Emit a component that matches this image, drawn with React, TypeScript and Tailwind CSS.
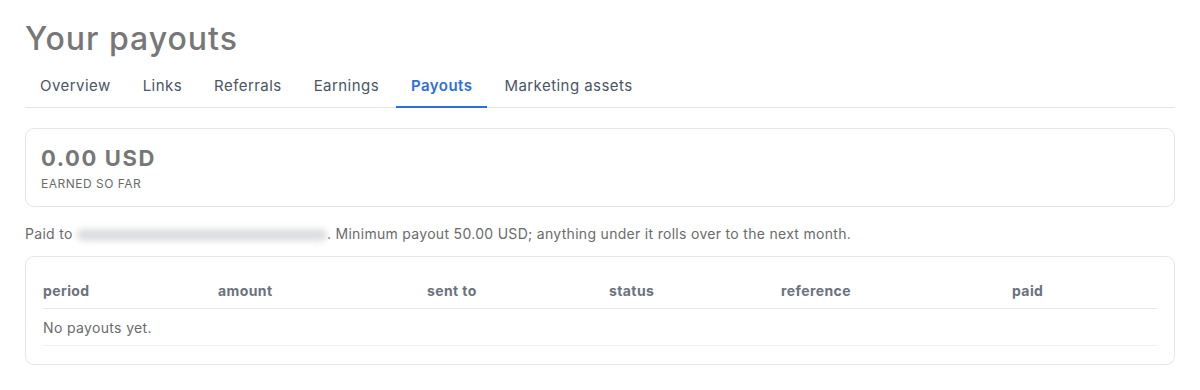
import clsx from 'clsx';

const TABS = ['Overview', 'Links', 'Referrals', 'Earnings', 'Payouts', 'Marketing assets'];
const ACTIVE = 'Payouts';

const COLS = [
  { label: 'period', w: 'w-[175px]' },
  { label: 'amount', w: 'w-[209px]' },
  { label: 'sent to', w: 'w-[182px]' },
  { label: 'status', w: 'w-[172px]' },
  { label: 'reference', w: 'w-[231px]' },
  { label: 'paid', w: 'flex-1' },
];

export default function App() {
  return (
    <div className="min-h-[390px] bg-white px-[25px] pt-[19px] font-['Inter','Liberation_Sans',sans-serif] text-[#6b6b6b]">
      <h1 className="text-[32px] leading-[40px] font-medium tracking-[1px] text-[#777777]">Your payouts</h1>

      <nav className="mt-[10px] flex gap-[2px] border-b border-[#e3e5e8]">
        {TABS.map(t => (
          <div
            key={t}
            className={clsx(
              'px-[15px] pt-[7px] pb-[10px] text-[15px] leading-[20px] tracking-[0.45px] border-b-2 -mb-px',
              t === ACTIVE ? 'border-[#2f6fdc] font-semibold text-[#2f6fdc]' : 'border-transparent text-[#4b5563]',
            )}
          >
            {t}
          </div>
        ))}
      </nav>

      <div className="mt-[20px] rounded-[9px] border border-[#e6e6e6] px-[15px] pt-[15px] pb-[14px]">
        <div className="text-[22px] leading-[28px] font-bold tracking-[1.6px] text-[#777777]">0.00 USD</div>
        <div className="mt-[4px] text-[12px] leading-[16px] uppercase tracking-[0.5px] text-[#6b6b6b]">Earned so far</div>
      </div>

      <p className="mt-[17px] text-[14px] leading-[20px] tracking-[0.3px] text-[#6b6b6b]">
        Paid to{' '}
        <span className="inline-block align-middle h-[12px] w-[250px] rounded-full bg-[#dcdde0] blur-[3px]" />
        . Minimum payout 50.00 USD; anything under it rolls over to the next month.
      </p>

      <div className="mt-[12px] rounded-[9px] border border-[#e6e6e6] px-[17px] pt-[24px] pb-[18px]">
        <div className="flex border-b border-[#e6e7ea] pb-[7px]">
          {COLS.map(c => (
            <div key={c.label} className={clsx(c.w, 'text-[14px] leading-[20px] font-bold tracking-[0.4px] text-[#6b7280]')}>
              {c.label}
            </div>
          ))}
        </div>
        <div className="border-b border-[#f0f0f2] pt-[9px] pb-[7px] text-[14px] leading-[20px] tracking-[0.35px] text-[#6b6b6b]">No payouts yet.</div>
      </div>
    </div>
  );
}
